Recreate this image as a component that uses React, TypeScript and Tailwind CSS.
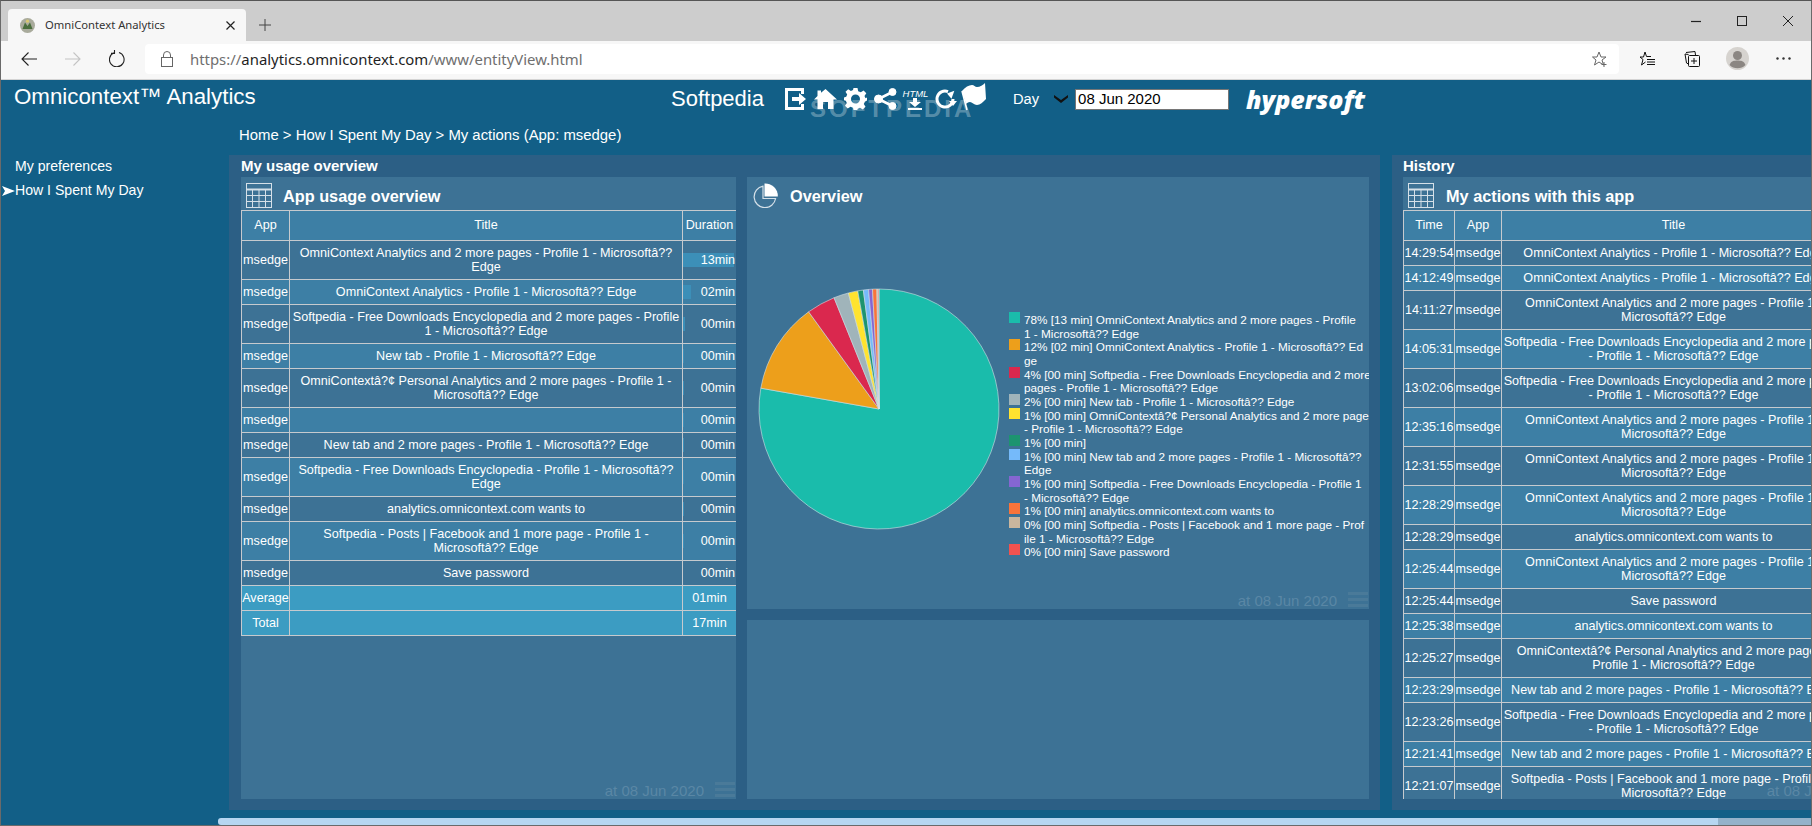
import React from 'react';

type Slice = { from: number; to: number; color: string };

const slices: Slice[] = [
  { from: 0, to: 280, color: '#1abcab' },
  { from: 280, to: 324.1, color: '#ed9f1b' },
  { from: 324.1, to: 338, color: '#da284e' },
  { from: 338, to: 345.2, color: '#a0b4ba' },
  { from: 345.2, to: 349.8, color: '#ffe32f' },
  { from: 349.8, to: 352.5, color: '#1c9470' },
  { from: 352.5, to: 355, color: '#75bafa' },
  { from: 355, to: 356.9, color: '#8566d2' },
  { from: 356.9, to: 359, color: '#f9743a' },
  { from: 359, to: 359.6, color: '#c9b69e' },
  { from: 359.6, to: 360, color: '#f1524f' },
];

const legend: { color: string; lines: string[] }[] = [
  { color: '#1abcab', lines: ['78% [13 min] OmniContext Analytics and 2 more pages - Profile', '1 - Microsoftâ?? Edge'] },
  { color: '#ed9f1b', lines: ['12% [02 min] OmniContext Analytics - Profile 1 - Microsoftâ?? Ed', 'ge'] },
  { color: '#da284e', lines: ['4% [00 min] Softpedia - Free Downloads Encyclopedia and 2 more', 'pages - Profile 1 - Microsoftâ?? Edge'] },
  { color: '#a0b4ba', lines: ['2% [00 min] New tab - Profile 1 - Microsoftâ?? Edge'] },
  { color: '#ffe32f', lines: ['1% [00 min] OmniContextâ?¢ Personal Analytics and 2 more pages', '- Profile 1 - Microsoftâ?? Edge'] },
  { color: '#1c9470', lines: ['1% [00 min]'] },
  { color: '#75bafa', lines: ['1% [00 min] New tab and 2 more pages - Profile 1 - Microsoftâ??', 'Edge'] },
  { color: '#8566d2', lines: ['1% [00 min] Softpedia - Free Downloads Encyclopedia - Profile 1', '- Microsoftâ?? Edge'] },
  { color: '#f9743a', lines: ['1% [00 min] analytics.omnicontext.com wants to'] },
  { color: '#c9b69e', lines: ['0% [00 min] Softpedia - Posts | Facebook and 1 more page - Prof', 'ile 1 - Microsoftâ?? Edge'] },
  { color: '#f1524f', lines: ['0% [00 min] Save password'] },
];

const usageRows = [
  { title: 'OmniContext Analytics and 2 more pages - Profile 1 - Microsoftâ?? Edge', time: '13min', bar: 51 },
  { title: 'OmniContext Analytics - Profile 1 - Microsoftâ?? Edge', time: '02min', bar: 8 },
  { title: 'Softpedia - Free Downloads Encyclopedia and 2 more pages - Profile 1 - Microsoftâ?? Edge', time: '00min', bar: 2 },
  { title: 'New tab - Profile 1 - Microsoftâ?? Edge', time: '00min', bar: 1 },
  { title: 'OmniContextâ?¢ Personal Analytics and 2 more pages - Profile 1 - Microsoftâ?? Edge', time: '00min', bar: 1 },
  { title: '', time: '00min', bar: 1 },
  { title: 'New tab and 2 more pages - Profile 1 - Microsoftâ?? Edge', time: '00min', bar: 1 },
  { title: 'Softpedia - Free Downloads Encyclopedia - Profile 1 - Microsoftâ?? Edge', time: '00min', bar: 1 },
  { title: 'analytics.omnicontext.com wants to', time: '00min', bar: 1 },
  { title: 'Softpedia - Posts | Facebook and 1 more page - Profile 1 - Microsoftâ?? Edge', time: '00min', bar: 1 },
  { title: 'Save password', time: '00min', bar: 0 },
];

const historyRows = [
  ['14:29:54', 'OmniContext Analytics - Profile 1 - Microsoftâ?? Edge'],
  ['14:12:49', 'OmniContext Analytics - Profile 1 - Microsoftâ?? Edge'],
  ['14:11:27', 'OmniContext Analytics and 2 more pages - Profile 1 - Microsoftâ?? Edge'],
  ['14:05:31', 'Softpedia - Free Downloads Encyclopedia and 2 more pages - Profile 1 - Microsoftâ?? Edge'],
  ['13:02:06', 'Softpedia - Free Downloads Encyclopedia and 2 more pages - Profile 1 - Microsoftâ?? Edge'],
  ['12:35:16', 'OmniContext Analytics and 2 more pages - Profile 1 - Microsoftâ?? Edge'],
  ['12:31:55', 'OmniContext Analytics and 2 more pages - Profile 1 - Microsoftâ?? Edge'],
  ['12:28:29', 'OmniContext Analytics and 2 more pages - Profile 1 - Microsoftâ?? Edge'],
  ['12:28:29', 'analytics.omnicontext.com wants to'],
  ['12:25:44', 'OmniContext Analytics and 2 more pages - Profile 1 - Microsoftâ?? Edge'],
  ['12:25:44', 'Save password'],
  ['12:25:38', 'analytics.omnicontext.com wants to'],
  ['12:25:27', 'OmniContextâ?¢ Personal Analytics and 2 more pages - Profile 1 - Microsoftâ?? Edge'],
  ['12:23:29', 'New tab and 2 more pages - Profile 1 - Microsoftâ?? Edge'],
  ['12:23:26', 'Softpedia - Free Downloads Encyclopedia and 2 more pages - Profile 1 - Microsoftâ?? Edge'],
  ['12:21:41', 'New tab and 2 more pages - Profile 1 - Microsoftâ?? Edge'],
  ['12:21:07', 'Softpedia - Posts | Facebook and 1 more page - Profile 1 - Microsoftâ?? Edge'],
];

// pie wedge, angles clockwise from the top
function wedge(from: number, to: number) {
  const r = 120;
  const c = 125;
  const pt = (a: number) => {
    const rad = (a * Math.PI) / 180;
    return `${c + r * Math.sin(rad)} ${c - r * Math.cos(rad)}`;
  };
  return `M${c} ${c} L${pt(from)} A${r} ${r} 0 ${to - from > 180 ? 1 : 0} 1 ${pt(to)} Z`;
}

const cell = 'border border-[#c6cace] py-[5px] px-0 text-center align-middle';
const headCell = 'border border-[#c6cace] pt-[7px] pb-[8px] px-0 text-center align-middle font-normal';

function TableIcon() {
  return (
    <svg width="26" height="25" viewBox="0 0 26 25" fill="none" stroke="#d5e0e8" strokeWidth="1">
      <rect x="0.5" y="0.5" width="25" height="24" />
      <path d="M0.5 6.5H25.5" strokeWidth="2" />
      <path d="M0.5 12.5H25.5M0.5 18.5H25.5M6.5 7V24.5M13 7V24.5M19.5 7V24.5" />
    </svg>
  );
}

function PieIcon() {
  return (
    <svg width="25" height="25" viewBox="0 0 25 25" fill="none">
      <path d="M10 3.2A10.8 10.8 0 1 0 22.6 15.5H10Z" stroke="#d5e0e8" strokeWidth="1.2" />
      <path d="M11.5 0.5A12.5 12.5 0 0 1 24.8 13.5H11.5Z" fill="#fff" />
    </svg>
  );
}

function CardFooter() {
  return (
    <>
      <span className="absolute right-[32px] bottom-0 text-[15px] leading-[17px] text-[#5a87a5]">at 08 Jun 2020</span>
      <div className="absolute right-px bottom-[2px] flex w-[20px] flex-col gap-[3px]">
        <div className="h-[3px] bg-[#4a7a99]" />
        <div className="h-[3px] bg-[#4a7a99]" />
        <div className="h-[3px] bg-[#4a7a99]" />
      </div>
    </>
  );
}

function HeaderIcons() {
  return (
    <div className="relative ml-[20px] flex h-[26px] items-center gap-[7px] text-white">
      <svg className="w-[23px]" width="23" height="22" viewBox="0 0 23 22" fill="#fff">
        <path d="M1 0H20V6H17V3H4V19H17V16H20V22H1Z" />
        <path d="M8 9H15V5L22 11L15 17V13H8Z" />
      </svg>
      <svg className="w-[23px]" width="23" height="20" viewBox="0 0 23 20" fill="#fff">
        <path d="M11.5 0L23 10.5H19.5V20H14V13H9V20H3.5V10.5H0L3.5 7V1.5H7V3.8Z" />
      </svg>
      <svg className="w-[23px]" width="23" height="22" viewBox="0 0 23 22" fill="#fff">
        <path fillRule="evenodd" d="M9.5 0H13.5L14.2 3.2L16.8 4.3L19.6 2.5L22.3 5.3L20.5 8L21.5 10.2L23 9.5V12.6L20.8 13.8L19.8 16L21.5 18.8L18.8 21.5L16 19.7L13.8 20.7L13.3 22H9.5L9 19.8L6.5 18.8L3.7 20.6L1 17.8L2.8 15L1.8 12.8L0 12.3V9.4L2.2 8.8L3.2 6.4L1.5 3.8L4.2 1.2L6.9 3L9 2Z M11.5 6.5A4.5 4.5 0 1 0 11.5 15.5A4.5 4.5 0 1 0 11.5 6.5Z" />
      </svg>
      <svg className="w-[23px]" width="23" height="22" viewBox="0 0 23 22" fill="#fff" stroke="#fff">
        <circle cx="4.5" cy="11" r="4" />
        <circle cx="18.5" cy="4" r="3.5" />
        <circle cx="18.5" cy="18" r="3.5" />
        <path d="M4.5 11L18.5 4M4.5 11L18.5 18" strokeWidth="2.6" fill="none" />
      </svg>
      <div className="flex w-[23px] flex-col items-center">
        <span className="text-[9.5px] leading-[9px] italic">HTML</span>
        <svg width="14" height="12" viewBox="0 0 14 12" fill="#fff">
          <path d="M5 0H9V4H13L7 9L1 4H5Z" />
          <rect x="0" y="10" width="14" height="2" />
        </svg>
      </div>
      <svg className="w-[23px]" width="23" height="20" viewBox="0 0 23 20" fill="none">
        <path d="M19 10A8 8 0 1 1 14 2.6" stroke="#fff" strokeWidth="3" />
        <path d="M13 5.5L19 0.5V9Z" fill="#fff" transform="rotate(20 16 5)" />
        <path d="M15 12H23L19 17Z" fill="#fff" />
      </svg>
      <svg className="-mt-[4px] -ml-[3px] w-[25px]" width="25" height="28" viewBox="0 0 25 28" fill="#fff">
        <path d="M1 8C4 4 8 2 11 2C13 2 14 4 16 4C19 4 22 2 24 0L25 16C22 19 19 22 16 22C13 22 11 19 9 19C7 19 6 20 5 21Z" />
        <path d="M1 8L6 27" stroke="#fff" strokeWidth="1.6" />
      </svg>
      <span className="pointer-events-none absolute top-[10px] left-[26px] text-[24px] leading-[26px] font-bold tracking-[3px] whitespace-nowrap text-white/30">
        SOFTPEDIA
      </span>
    </div>
  );
}

function BrowserChrome() {
  return (
    <div className="font-['Noto_Sans',sans-serif]">
      <div className="flex h-[41px] items-end bg-[#cdcdcd] pl-[8px]">
        <div className="flex h-[32px] w-[238px] items-center rounded-t-[4px] bg-[#f7f7f7] pl-[12px]">
          <svg width="15" height="15" viewBox="0 0 15 15">
            <circle cx="7.5" cy="7.5" r="7.5" fill="#a9ab9c" />
            <path d="M2.5 11L5 4.5L7.5 8L10 4.5L12.5 11Z" fill="#4a6e3c" />
            <circle cx="7.5" cy="3.2" r="1.6" fill="#d8c870" />
          </svg>
          <span className="ml-[10px] text-[11.25px] leading-[16px] whitespace-nowrap text-[#333]">OmniContext Analytics</span>
          <svg className="mr-[11px] ml-auto" width="9" height="9" viewBox="0 0 9 9" stroke="#222" strokeWidth="1.2">
            <path d="M0.5 0.5L8.5 8.5M8.5 0.5L0.5 8.5" />
          </svg>
        </div>
        <svg className="mb-[10px] ml-[13px]" width="12" height="12" viewBox="0 0 12 12" stroke="#444" strokeWidth="1">
          <path d="M6 0V12M0 6H12" />
        </svg>
        <div className="mb-[7px] ml-auto flex h-[27px] items-center self-end">
          <svg width="10" height="10" viewBox="0 0 10 10" stroke="#222" strokeWidth="1.2"><path d="M0 5.5H10" /></svg>
          <svg className="ml-[36px]" width="10" height="10" viewBox="0 0 10 10" fill="none" stroke="#222" strokeWidth="1"><rect x="0.5" y="0.5" width="9" height="9" /></svg>
          <svg className="mr-[19px] ml-[36px]" width="10" height="10" viewBox="0 0 10 10" stroke="#222" strokeWidth="1"><path d="M0 0L10 10M10 0L0 10" /></svg>
        </div>
      </div>
      <div className="flex h-[39px] items-center border-b border-[#d4d4d4] bg-[#f7f7f7] pb-[3px] pl-[21px]">
        <svg width="16" height="14" viewBox="0 0 16 14" fill="none" stroke="#222" strokeWidth="1.1"><path d="M16 7H1M7.5 0.5L1 7L7.5 13.5" /></svg>
        <svg className="ml-[28px]" width="16" height="14" viewBox="0 0 16 14" fill="none" stroke="#c4c4c4" strokeWidth="1.1"><path d="M0 7H15M8.5 0.5L15 7L8.5 13.5" /></svg>
        <svg className="ml-[28px]" width="16" height="17" viewBox="0 0 16 17" fill="none" stroke="#222" strokeWidth="1.1"><path d="M10 2.6A7.3 7.3 0 1 1 5 2.8M5.5 0V3.4H2" /></svg>
        <div className="ml-[20px] flex h-[30px] w-[1474px] items-center rounded-[4px] bg-white pl-[16px]">
          <svg width="12" height="16" viewBox="0 0 12 16" fill="none" stroke="#666" strokeWidth="1"><rect x="0.5" y="6.5" width="11" height="9" /><path d="M2.5 6.5V4A3.5 3.5 0 0 1 9.5 4V6.5" /></svg>
          <span className="ml-[17px] text-[14.9px] leading-[20px] whitespace-nowrap text-[#6f6f6f]">
            https://<span className="text-[#1f1f1f]">analytics.omnicontext.com</span>/www/entityView.html
          </span>
          <svg className="mr-[12px] ml-auto" width="15" height="16" viewBox="0 0 15 16" fill="none" stroke="#666" strokeWidth="1">
            <path d="M7 1L9 6H14L10 9L11.5 14L7 11L2.5 14L4 9L0.5 6H5Z" />
            <path d="M12 11V16M9.5 13.5H14.5" />
          </svg>
        </div>
        <svg className="ml-[20px]" width="16" height="16" viewBox="0 0 16 16" fill="none" stroke="#111" strokeWidth="1">
          <path d="M6 1L7.5 5.5H12M1 6H4.5L6 1M1 6L4 8.5L2.5 14L6.5 11" />
          <path d="M8 8.5H16M8 11H16M8 13.5H16" />
        </svg>
        <svg className="ml-[29px]" width="16" height="16" viewBox="0 0 16 16" fill="none" stroke="#111" strokeWidth="1">
          <path d="M4.5 3.5L1 3L2.5 12L4.5 13" />
          <path d="M2 1.5L11 0.5L11.5 4" />
          <rect x="4.5" y="4.5" width="11" height="11" rx="1" />
          <path d="M10 7V13M7 10H13" />
        </svg>
        <svg className="ml-[26px]" width="23" height="23" viewBox="0 0 23 23">
          <circle cx="11.5" cy="11.5" r="11.5" fill="#d6d3cf" />
          <circle cx="11.5" cy="8.5" r="4.5" fill="#8b8682" />
          <path d="M3.5 18C5 14 8 13.5 11.5 13.5S18 14 19.5 18A11.5 11.5 0 0 1 3.5 18Z" fill="#8b8682" />
        </svg>
        <svg className="ml-[27px]" width="15" height="3" viewBox="0 0 15 3" fill="#333">
          <circle cx="1.5" cy="1.5" r="1.2" /><circle cx="7.5" cy="1.5" r="1.2" /><circle cx="13.5" cy="1.5" r="1.2" />
        </svg>
      </div>
    </div>
  );
}

function UsageTable() {
  return (
    <table className="w-[495px] table-fixed border-collapse text-[12.6px] leading-[14px] text-white">
      <colgroup>
        <col className="w-[48px]" />
        <col className="w-[393px]" />
        <col className="w-[54px]" />
      </colgroup>
      <thead>
        <tr className="bg-[#3d7fa5]">
          <th className={headCell}>App</th>
          <th className={headCell}>Title</th>
          <th className={headCell}>Duration</th>
        </tr>
      </thead>
      <tbody>
        {usageRows.map((row, i) => (
          <tr key={i} className={i % 2 === 0 ? 'bg-[#3d7295]' : 'bg-[#3d7fa5]'}>
            <td className={cell}>msedge</td>
            <td className={cell}>{row.title}</td>
            <td className={cell}>
              <div className="relative h-[14px] pr-[1px] text-right">
                <div className="absolute top-0 left-0 h-full bg-[#3c8fb8]" style={{ width: row.bar }} />
                <span className="relative">{row.time}</span>
              </div>
            </td>
          </tr>
        ))}
        <tr className="bg-[#3c9cc2]">
          <td className={cell}>Average</td>
          <td className={cell}></td>
          <td className={cell}>01min</td>
        </tr>
        <tr className="bg-[#3c9cc2]">
          <td className={cell}>Total</td>
          <td className={cell}></td>
          <td className={cell}>17min</td>
        </tr>
      </tbody>
    </table>
  );
}

function HistoryTable() {
  return (
    <table className="w-[495px] table-fixed border-collapse text-[12.6px] leading-[14px] text-white">
      <colgroup>
        <col className="w-[51px]" />
        <col className="w-[47px]" />
        <col className="w-[344px]" />
        <col className="w-[53px]" />
      </colgroup>
      <thead>
        <tr className="bg-[#3d7fa5]">
          <th className={headCell}>Time</th>
          <th className={headCell}>App</th>
          <th className={headCell}>Title</th>
          <th className={headCell}>Duration</th>
        </tr>
      </thead>
      <tbody>
        {historyRows.map((row, i) => (
          <tr key={i} className={i % 2 === 0 ? 'bg-[#3d7295]' : 'bg-[#3d7fa5]'}>
            <td className={cell}>{row[0]}</td>
            <td className={cell}>msedge</td>
            <td className={cell}>{row[1]}</td>
            <td className={cell}></td>
          </tr>
        ))}
      </tbody>
    </table>
  );
}

export default function App() {
  return (
    <div className="relative flex h-[826px] w-[1812px] flex-col overflow-hidden bg-[#125f87] font-['Liberation_Sans',Arial,sans-serif] text-white">
      <BrowserChrome />

      {/* top bar */}
      <div className="flex h-[38px] items-center">
        <div className="-mt-[4px] w-[671px] shrink-0 pl-[14px] text-[22.3px] leading-[26px] whitespace-nowrap">Omnicontext™ Analytics</div>
        <span className="text-[22px] leading-[26px]">Softpedia</span>
        <HeaderIcons />
        <span className="ml-[27px] text-[14.67px]">Day</span>
        <svg className="ml-[15px]" width="14" height="8" viewBox="0 0 14 8" fill="#111">
          <path d="M0 0L7 5L14 0V2.5L7 8L0 2.5Z" />
        </svg>
        <input
          readOnly
          value="08 Jun 2020"
          className="ml-[7px] h-[21px] w-[154px] border border-[#767676] bg-white pl-[2px] text-[15px] text-black"
        />
        <span className="ml-[17px] font-['Open_Sans',sans-serif] text-[25px] leading-[28px] font-extrabold italic">hypersoft</span>
      </div>

      <div className="flex h-[37px] items-center pb-[3px] pl-[239px] text-[14.9px] whitespace-nowrap">
        Home &gt; How I Spent My Day &gt; My actions (App: msedge)
      </div>

      <div className="flex h-[655px]">
        {/* sidebar */}
        <div className="w-[229px] shrink-0 text-[14.1px]">
          <div className="flex h-[24px] items-center pl-[15px]">My preferences</div>
          <div className="flex h-[24px] items-center pl-[2px]">
            <svg width="13" height="10" viewBox="0 0 13 10" fill="#fff"><path d="M0 0L13 5L0 10L3 5Z" /></svg>
            How I Spent My Day
          </div>
        </div>

        {/* usage panel */}
        <div className="flex w-[1151px] shrink-0 flex-col bg-[#2c5f85]">
          <div className="h-[22px] pl-[12px] text-[15px] leading-[22px] font-bold">My usage overview</div>
          <div className="flex gap-[11px] pl-[12px]">
            <div className="relative h-[622px] w-[495px] overflow-hidden bg-[#3d7295]">
              <div className="flex h-[33px] items-start gap-[11px] pt-[6px] pl-[5px]">
                <TableIcon />
                <span className="pt-px text-[16.3px] leading-[24px] font-bold">App usage overview</span>
              </div>
              <UsageTable />
              <CardFooter />
            </div>
            <div className="flex w-[622px] flex-col gap-[11px]">
              <div className="relative h-[432px] overflow-hidden bg-[#3d7295]">
                <div className="flex h-[33px] items-start gap-[12px] pt-[6px] pl-[6px]">
                  <PieIcon />
                  <span className="pt-px text-[16.3px] leading-[24px] font-bold">Overview</span>
                </div>
                <div className="flex items-start pt-[74px] pl-[7px]">
                  <svg width="250" height="250" viewBox="0 0 250 250" className="shrink-0">
                    {slices.map((s, i) => (
                      <path key={i} d={wedge(s.from, s.to)} fill={s.color} stroke="#d4e0e6" strokeWidth="0.6" />
                    ))}
                  </svg>
                  <div className="mt-[29px] ml-[5px] text-[11.75px] leading-[13.67px] whitespace-nowrap">
                    {legend.map((item, i) => (
                      <div key={i} className="flex items-start">
                        <div className="-mt-px h-[11px] w-[11px] shrink-0" style={{ backgroundColor: item.color }} />
                        <div className="ml-[4px]">
                          {item.lines.map((line, j) => (
                            <div key={j}>{line}</div>
                          ))}
                        </div>
                      </div>
                    ))}
                  </div>
                </div>
                <CardFooter />
              </div>
              <div className="h-[179px] bg-[#3d7295]" />
            </div>
          </div>
        </div>

        {/* history panel */}
        <div className="ml-[12px] flex w-[517px] shrink-0 flex-col bg-[#2c5f85]">
          <div className="h-[22px] pl-[11px] text-[15px] leading-[22px] font-bold">History</div>
          <div className="relative ml-[11px] h-[622px] w-[495px] overflow-hidden bg-[#3d7295]">
            <div className="flex h-[33px] items-start gap-[12px] pt-[6px] pl-[5px]">
              <TableIcon />
              <span className="pt-px text-[16.3px] leading-[24px] font-bold">My actions with this app</span>
            </div>
            <HistoryTable />
            <CardFooter />
          </div>
        </div>
      </div>

      {/* page scrollbar */}
      <div className="mt-[8px] flex h-[7px]">
        <div className="ml-[218px] w-[1500px] rounded-l-[3px] bg-[#b6d6f1]" />
        <div className="flex-1 bg-[#93b2ca]" />
      </div>

      <div className="pointer-events-none absolute inset-0 border border-x-[#6a6a6a] border-t-[#555] border-b-[#6a6a6a]" />
    </div>
  );
}
